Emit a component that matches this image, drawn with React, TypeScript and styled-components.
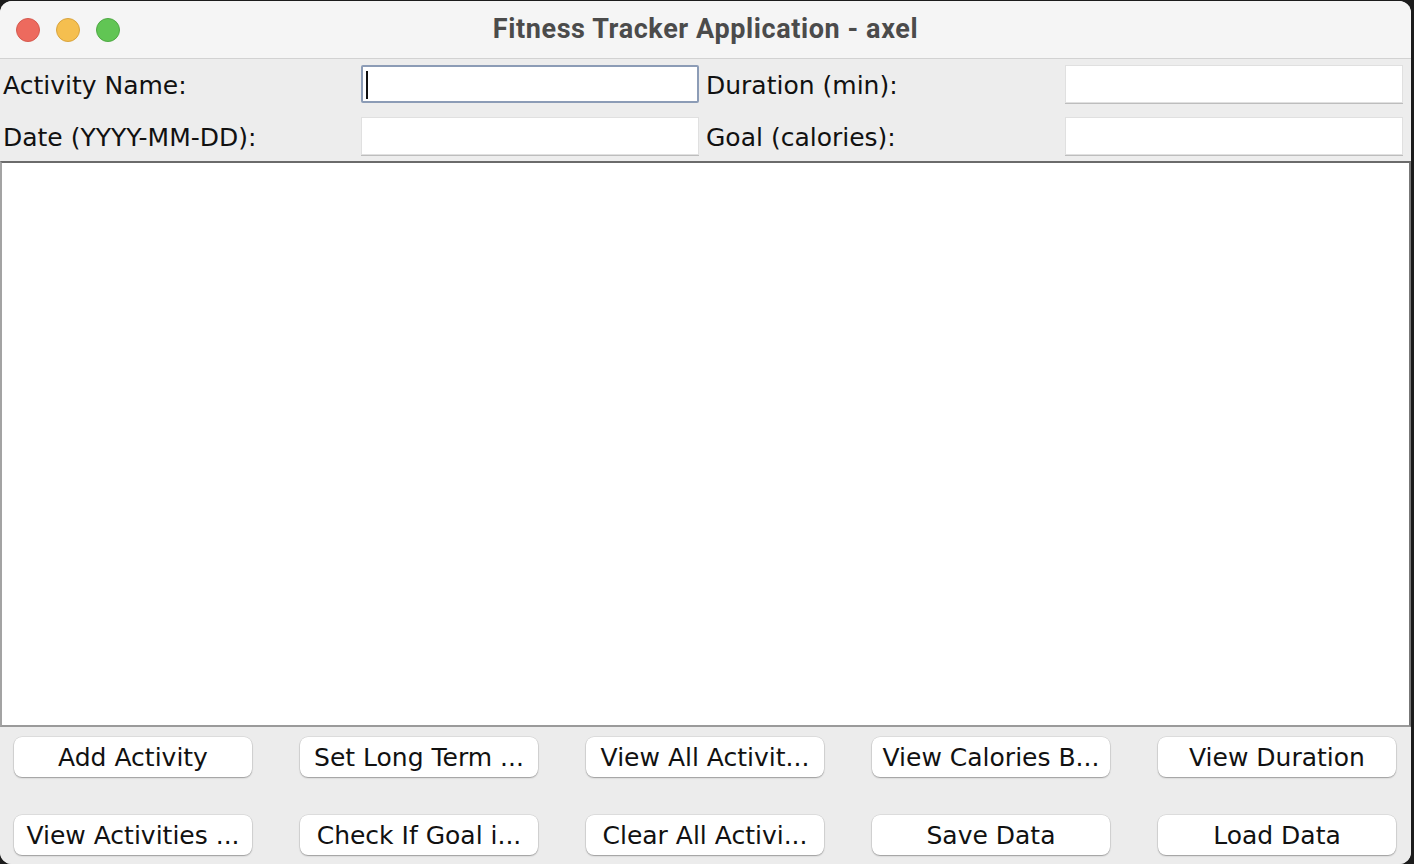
import styled, { createGlobalStyle } from "styled-components";

const GlobalStyle = createGlobalStyle`
    html, body {
        margin: 0;
        padding: 0;
        background: #1c1c1c;
        overflow: hidden;
    }
    * {
        box-sizing: border-box;
    }
`;

const formRows = [
    { left: "Activity Name:", right: "Duration (min):", focused: true },
    { left: "Date (YYYY-MM-DD):", right: "Goal (calories):", focused: false },
];

const buttons = [
    "Add Activity",
    "Set Long Term ...",
    "View All Activit...",
    "View Calories B...",
    "View Duration",
    "View Activities ...",
    "Check If Goal i...",
    "Clear All Activi...",
    "Save Data",
    "Load Data",
];

export default function App() {
    return (
        <>
            <GlobalStyle />
            <Window>
                <TitleBar>
                    <Lights>
                        <Light color="#ed6a5e" edge="#d55a4f" />
                        <Light color="#f5bf4f" edge="#d9a43e" />
                        <Light color="#61c554" edge="#4fa944" />
                    </Lights>
                    <Title>Fitness Tracker Application - axel</Title>
                </TitleBar>

                <Form>
                    {formRows.map((row) => (
                        <FormRow key={row.left}>
                            <Label>{row.left}</Label>
                            <Field focused={row.focused}>
                                {row.focused && <Caret />}
                            </Field>
                            <Label>{row.right}</Label>
                            <Field />
                        </FormRow>
                    ))}
                </Form>

                <TextArea />

                <ButtonPanel>
                    {buttons.map((b) => (
                        <Button key={b}>{b}</Button>
                    ))}
                </ButtonPanel>
            </Window>
        </>
    );
}

const Window = styled.div`
    margin: 1px 3px 0 0;
    height: 863px;
    width: 1411px;
    border-radius: 12px;
    overflow: hidden;
    background: #ececec;
    display: flex;
    flex-direction: column;
    font-family: "DejaVu Sans", sans-serif;
`;

const TitleBar = styled.div`
    height: 58px;
    flex-shrink: 0;
    background: #f5f5f5;
    border-bottom: 1px solid #d2d2d2;
    position: relative;
    display: flex;
    align-items: center;
    justify-content: center;
`;

const Lights = styled.div`
    position: absolute;
    left: 16px;
    top: 17px;
    display: flex;
    gap: 16px;
`;

const Light = styled.span<{ color: string; edge: string }>`
    width: 24px;
    height: 24px;
    border-radius: 50%;
    background: ${(p) => p.color};
    border: 1px solid ${(p) => p.edge};
`;

const Title = styled.div`
    font-family: Roboto, "Liberation Sans", sans-serif;
    font-weight: 700;
    font-size: 27px;
    letter-spacing: 0.6px;
    color: #4b4b4b;
    margin-top: -2px;
`;

const Form = styled.div`
    display: flex;
    flex-direction: column;
    gap: 14px;
    padding: 6px 0 6px 3px;
    background: #ededed;
`;

const FormRow = styled.div`
    display: grid;
    grid-template-columns: 358px 345px 359px 338px;
    align-items: center;
    height: 38px;
`;

const Label = styled.div`
    font-size: 25px;
    color: #111;
    white-space: nowrap;
    margin-top: 2px;
`;

const Field = styled.div<{ focused?: boolean }>`
    width: 338px;
    height: 38px;
    background: #fff;
    position: relative;
    border: ${(p) => (p.focused ? "2px solid #8c9cb6" : "1px solid #e0e0e0")};
    border-radius: ${(p) => (p.focused ? "2px" : "0")};
    box-shadow: ${(p) => (p.focused ? "none" : "0 1px 0 #bdbdbd")};
`;

const Caret = styled.span`
    position: absolute;
    left: 3px;
    top: 4px;
    width: 2px;
    height: 28px;
    background: #111;
`;

const TextArea = styled.div`
    flex: 1;
    background: #fff;
    border: 2px solid #a3a3a3;
    border-top-color: #6b6b6b;
    border-right-color: #777;
    border-bottom-color: #9a9a9a;
`;

const ButtonPanel = styled.div`
    height: 137px;
    flex-shrink: 0;
    display: grid;
    grid-template-columns: repeat(5, 238px);
    grid-template-rows: 40px 40px;
    column-gap: 48px;
    row-gap: 38px;
    padding: 10px 0 0 14px;
    background: #ececec;
`;

const Button = styled.div`
    background: #fff;
    border-radius: 8px;
    box-shadow: 0 0 0 0.5px rgba(0, 0, 0, 0.12), 0 1px 1.5px rgba(0, 0, 0, 0.3);
    display: flex;
    align-items: center;
    justify-content: center;
    font-size: 25px;
    color: #111;
    white-space: nowrap;
`;
